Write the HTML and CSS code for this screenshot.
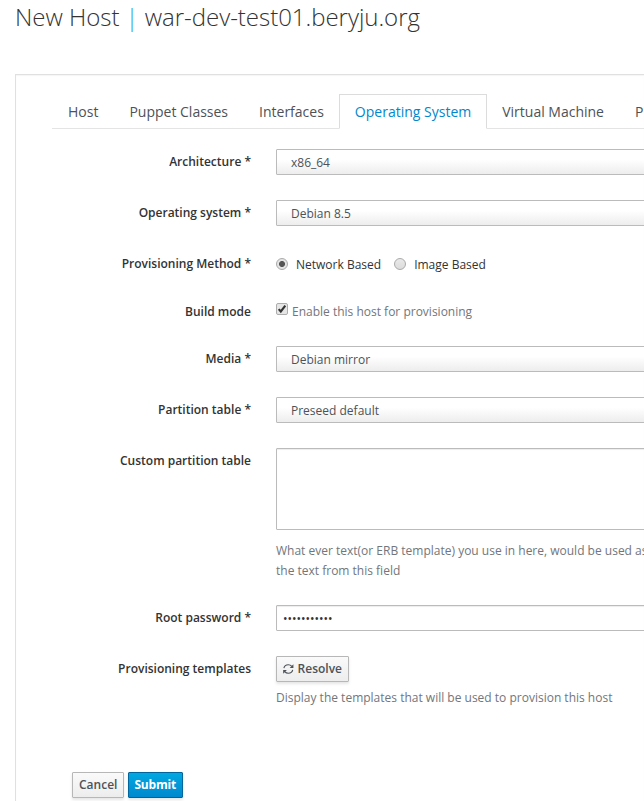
FILE: index.html
```html
<!DOCTYPE html>
<html lang="en">
<head>
<meta charset="utf-8">
<title>New Host</title>
<link rel="stylesheet" href="styles.css">
</head>
<body>
<h1 class="title">New Host <span class="divider">|</span> war-dev-test01.beryju.org</h1>
<main class="card">
  <nav class="tabs">
    <a class="tab">Host</a>
    <a class="tab">Puppet Classes</a>
    <a class="tab">Interfaces</a>
    <a class="tab active">Operating System</a>
    <a class="tab">Virtual Machine</a>
    <a class="tab">P</a>
  </nav>
  <form class="form">
    <div class="row"><label class="label">Architecture *</label><div class="select">x86_64</div></div>
    <div class="row"><label class="label">Operating system *</label><div class="select">Debian 8.5</div></div>
    <div class="row row-radio"><label class="label">Provisioning Method *</label>
      <div class="choices">
        <span class="radio checked"></span><span class="choice">Network Based</span>
        <span class="radio"></span><span class="choice">Image Based</span>
      </div>
    </div>
    <div class="row row-check"><label class="label">Build mode</label>
      <div class="choices">
        <svg class="check" viewBox="0 0 12 12"><rect x=".5" y=".5" width="11" height="11" rx="1.5" fill="#e6e6e6" stroke="#adadad"/><path d="M2.7 6.1l2.1 2.4L9.3 2.7" fill="none" stroke="#333" stroke-width="2.1"/></svg>
        <span class="muted">Enable this host for provisioning</span>
      </div>
    </div>
    <div class="row"><label class="label">Media *</label><div class="select">Debian mirror</div></div>
    <div class="row"><label class="label">Partition table *</label><div class="select">Preseed default</div></div>
    <div class="row row-area"><label class="label">Custom partition table</label>
      <div>
        <div class="area"></div>
        <p class="help">What ever text(or ERB template) you use in here, would be used as<br>the text from this field</p>
      </div>
    </div>
    <div class="row"><label class="label">Root password *</label><div class="input">•••••••••••</div></div>
    <div class="row row-templates"><label class="label">Provisioning templates</label>
      <div>
        <span class="btn resolve"><svg class="refresh" viewBox="0 0 12 12"><path d="M1 5C1.500 2.600 3.500 1.200 6 1.200c1.700 0 3 .7 4 1.900M11 7c-.5 2.400-2.500 3.800-5 3.800-1.700 0-3-.7-4-1.900" fill="none" stroke="currentColor" stroke-width="1.300"/><path d="M11.800.6v4.200H7.600zM.2 11.400V7.200h4.200z" fill="currentColor"/></svg>Resolve</span>
        <p class="help">Display the templates that will be used to provision this host</p>
      </div>
    </div>
    <div class="actions"><span class="btn">Cancel</span><span class="btn primary">Submit</span></div>
  </form>
</main>
</body>
</html>
```
FILE: styles.css
```css
* { box-sizing: border-box; }
html, body { height: 801px; overflow: hidden; }
body { margin: 0; background: #fff; color: #333; font: 12px/20px "Open Sans", sans-serif; }
.title { margin: 0; height: 74px; padding: 2px 0 0 15px; font-size: 24px; line-height: 29px; font-weight: 300; letter-spacing: -.03px; white-space: nowrap; }
.divider { color: #39a5dc; }
.card { height: 760px; margin-left: 15px; padding: 19px 0 0 36px; border: 1px solid #e0e0e0; border-right: 0; box-shadow: inset 0 1px 1px rgba(0,0,0,.04); overflow: hidden; }
.tabs { display: flex; height: 35px; border-bottom: 1px solid #e4e4e4; }
.tab { flex: none; height: 35px; margin-right: -1px; padding: 0 15px; border: 1px solid transparent; font-size: 14px; line-height: 34px; color: #4d5258; white-space: nowrap; }
.tab.active { background: #fff; border-color: #dcdcdc; border-bottom-color: #fff; color: #0088ce; }
.form { padding-top: 20px; }
.row { display: grid; grid-template-columns: 199px 480px; column-gap: 25px; height: 51px; align-items: start; }
.row-radio { height: 48px; }
.row-radio .choice { padding-top: 2px; }
.row-check { height: 47px; }
.row-area { height: 157px; }
.row-templates { height: 116px; }
.label { text-align: right; font-weight: 600; line-height: 25px; white-space: nowrap; }
.select, .input { height: 26px; border: 1px solid #bbb; border-radius: 1px; line-height: 25px; }
.select { padding-left: 14px; color: #4d5258; background: linear-gradient(#fff 40%, #ededed); }
.input { padding-left: 6px; box-shadow: inset 0 1px 1px rgba(0,0,0,.075); }
.area { height: 82px; border: 1px solid #bbb; border-radius: 1px; box-shadow: inset 0 1px 1px rgba(0,0,0,.075); }
.choices { display: flex; align-items: center; height: 26px; white-space: nowrap; }
.radio { width: 12px; height: 12px; border: 1px solid #aaa; border-radius: 50%; background: linear-gradient(#e9e9e9, #dcdcdc); }
.radio.checked { background: radial-gradient(circle, #555 0 2.6px, #e4e4e4 3.4px); }
.choice { margin: 0 13px 0 8px; }
.check { width: 12px; height: 12px; margin: -6px 4px 0 0; }
.muted, .help { color: #72767b; }
.help { margin: 11px 0 0; white-space: nowrap; }
.row-templates .help { margin-top: 6px; }
.btn { display: inline-flex; align-items: center; height: 26px; padding: 0 6px; border: 1px solid #b7b7b7; border-radius: 1px; background: linear-gradient(#fafafa, #ededed); color: #4d5258; font-weight: 600; box-shadow: 0 2px 3px rgba(3,3,3,.1); line-height: 22px; }
.resolve { display: flex; width: 73px; }
.refresh { width: 12px; height: 12px; margin-right: 4px; }
.actions { display: flex; gap: 4px; padding-left: 20px; }
.primary { width: 55px; padding: 0 5px; background: linear-gradient(#00a8e1, #0088ce); border-color: #00659c; color: #fff; font-weight: 700; letter-spacing: -.2px; }
```
